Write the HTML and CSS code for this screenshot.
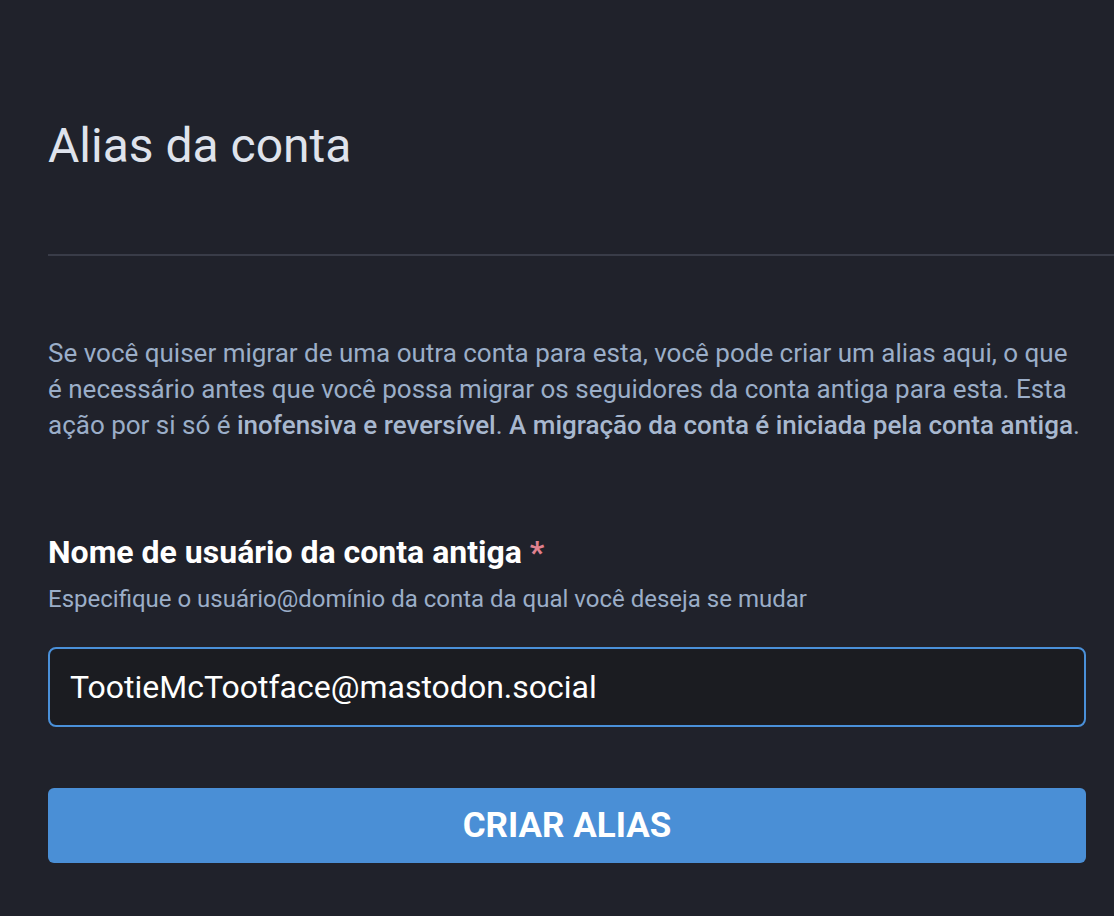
FILE: index.html
```html
<!DOCTYPE html>
<html lang="pt">
<head>
<meta charset="utf-8">
<title>Alias da conta</title>
<link rel="stylesheet" href="styles.css">
</head>
<body>
<main class="page">
  <header class="page-header">
    <h1 class="page-title">Alias da conta</h1>
  </header>
  <p class="intro">Se você quiser migrar de uma outra conta para esta, você pode criar um alias aqui, o que é necessário antes que você possa migrar os seguidores da conta antiga para esta. Esta ação por si só é <strong>inofensiva e reversível</strong>. <strong>A migração da conta é iniciada pela conta antiga</strong>.</p>
  <form class="alias-form">
    <div class="field">
      <label class="field-label" for="acct">Nome de usuário da conta antiga <abbr class="req" title="obrigatório">*</abbr></label>
      <span class="field-hint">Especifique o usuário@domínio da conta da qual você deseja se mudar</span>
      <input class="field-input" id="acct" type="text" value="TootieMcTootface@mastodon.social">
    </div>
    <button class="btn" type="button">Criar alias</button>
  </form>
</main>
</body>
</html>
```

FILE: styles.css
```css
* { box-sizing: border-box; }
html, body { margin: 0; padding: 0; }
body {
  background: #20222b;
  font-family: Roboto, "Noto Sans", sans-serif;
  height: 916px;
  overflow: hidden;
}
.page {
  padding: 0 28px 0 48px;
}
.page-header {
  padding-top: 118px;
  padding-bottom: 80px;
  border-bottom: 2px solid #393c48;
  margin-right: -28px;
}
.page-title {
  margin: 0;
  font-size: 48px;
  line-height: 56px;
  font-weight: 400;
  color: #dfe3ec;
}
.intro {
  margin: 79px 0 0;
  font-size: 26px;
  line-height: 36px;
  color: #9baec8;
}
.intro strong {
  font-weight: 500;
  color: #a8b8cf;
}
.alias-form {
  margin-top: 89px;
}
.field {
  display: flex;
  flex-direction: column;
}
.field-label {
  font-size: 32px;
  line-height: 40px;
  font-weight: 700;
  color: #ffffff;
}
.req {
  color: #e0818f;
  text-decoration: none;
  border: 0;
}
.field-hint {
  margin-top: 11px;
  font-size: 24px;
  line-height: 32px;
  color: #9baec8;
}
.field-input {
  margin-top: 32px;
  height: 80px;
  border: 2px solid #4a90d9;
  border-radius: 8px;
  background: #1b1c21;
  color: #ffffff;
  font-family: Roboto, sans-serif;
  font-size: 32px;
  padding: 0 20px;
  outline: none;
}
.btn {
  display: block;
  width: 100%;
  margin-top: 61px;
  height: 75px;
  border: 0;
  border-radius: 6px;
  background: #4a8fd6;
  color: #ffffff;
  font-family: Roboto, sans-serif;
  font-size: 35px;
  font-weight: 700;
  text-transform: uppercase;
  letter-spacing: 0;
}
```
